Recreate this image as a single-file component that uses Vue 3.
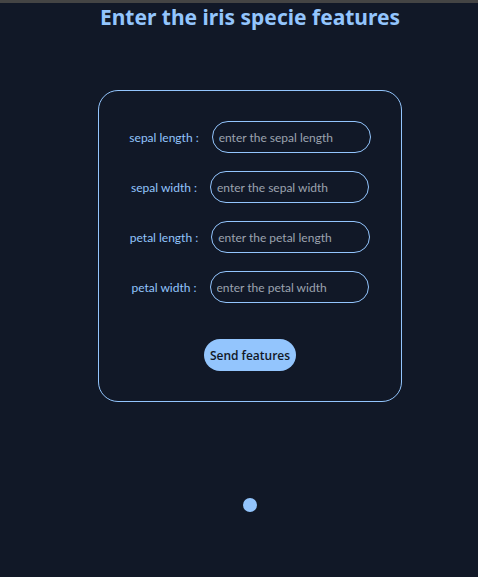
<script setup>
import { reactive } from 'vue'

const fields = [
  { id: 'sepal-length', name: 'sepal length' },
  { id: 'sepal-width', name: 'sepal width' },
  { id: 'petal-length', name: 'petal length' },
  { id: 'petal-width', name: 'petal width' },
]
const values = reactive({})
</script>

<template>
  <main class="page">
    <h1 class="title">Enter the iris specie features</h1>
    <form class="card" @submit.prevent>
      <div v-for="field in fields" :key="field.id" class="row">
        <label class="label" :for="field.id">{{ field.name }} :</label>
        <input
          :id="field.id"
          v-model="values[field.id]"
          class="input"
          type="text"
          :placeholder="`enter the ${field.name}`"
        />
      </div>
      <button class="submit" type="submit">Send features</button>
    </form>
    <div class="result"></div>
  </main>
</template>

<style>
body {
  background: #111827;
}
</style>

<style scoped>
.page {
  box-sizing: border-box;
  min-height: 100vh;
  padding-left: 22px;
  border-top: 3px solid #444444;
  display: flex;
  flex-direction: column;
  align-items: center;
  background: #111827;
  color: #93c5fd;
  font-family: Lato, "Noto Sans", sans-serif;
}
.title {
  margin: 0;
  font-family: "Noto Sans", sans-serif;
  font-size: 21px;
  line-height: 28px;
  font-weight: 700;
  white-space: nowrap;
}
.card {
  margin-top: 59px;
  padding: 30px;
  border: 1px solid #93c5fd;
  border-radius: 20px;
  display: flex;
  flex-direction: column;
  align-items: center;
  gap: 18px;
}
.row {
  display: flex;
  align-items: center;
  gap: 13px;
}
.label {
  padding-top: 2px;
  font-size: 12px;
  line-height: 16px;
}
.input {
  box-sizing: border-box;
  width: 159px;
  height: 32px;
  padding: 0 6px;
  border: 1px solid #93c5fd;
  border-radius: 16px;
  background: transparent;
  color: #93c5fd;
  font-family: inherit;
  font-size: 12px;
  outline: none;
}
.input::placeholder {
  color: #9ca3af;
  opacity: 1;
}
.submit {
  height: 32px;
  margin-top: 18px;
  padding: 0 6px;
  border: 0;
  border-radius: 16px;
  background: #93c5fd;
  color: #111827;
  font-family: "Open Sans", "Noto Sans", sans-serif;
  font-size: 12px;
  font-weight: 600;
}
.result {
  width: 14px;
  height: 14px;
  margin-top: 96px;
  border-radius: 50%;
  background: #93c5fd;
}
</style>
